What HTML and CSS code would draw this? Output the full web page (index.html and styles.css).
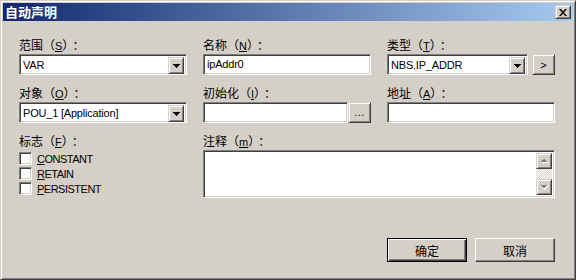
FILE: index.html
```html
<!DOCTYPE html>
<html lang="zh">
<head>
<meta charset="utf-8">
<title>自动声明</title>
<link rel="stylesheet" href="styles.css">
</head>
<body>
<div class="window">
  <div class="titlebar">
    <span class="title">自动声明</span>
    <span class="close raised">
      <svg width="8" height="7" viewBox="0 0 8 7"><path d="M0 0h2l2 2.4 2-2.4h2L5 3.5 8 7H6L4 4.6 2 7H0l3-3.5z" fill="#000"/></svg>
    </span>
  </div>
  <div class="content">
    <div class="grid">
      <div class="field">
        <div class="lbl">范围（<u>S</u>）<span class="colon">：</span></div>
        <div class="combo sunken"><span class="val">VAR</span><span class="drop raised"><svg width="7" height="4" viewBox="0 0 7 4"><path d="M0 0h7v1h-1v1h-1v1h-1v1h-1v-1h-1v-1h-1v-1h-1z" fill="#000"/></svg></span></div>
      </div>
      <div class="field">
        <div class="lbl">名称（<u>N</u>）<span class="colon">：</span></div>
        <div class="text sunken">ipAddr0</div>
      </div>
      <div class="field">
        <div class="lbl">类型（<u>T</u>）<span class="colon">：</span></div>
        <div class="inline gap4">
          <div class="combo sunken grow"><span class="val">NBS.IP_ADDR</span><span class="drop raised"><svg width="7" height="4" viewBox="0 0 7 4"><path d="M0 0h7v1h-1v1h-1v1h-1v1h-1v-1h-1v-1h-1v-1h-1z" fill="#000"/></svg></span></div>
          <span class="sbtn raised">&gt;</span>
        </div>
      </div>

      <div class="field">
        <div class="lbl">对象（<u>O</u>）<span class="colon">：</span></div>
        <div class="combo sunken"><span class="val">POU_1 [Application]</span><span class="drop raised"><svg width="7" height="4" viewBox="0 0 7 4"><path d="M0 0h7v1h-1v1h-1v1h-1v1h-1v-1h-1v-1h-1v-1h-1z" fill="#000"/></svg></span></div>
      </div>
      <div class="field">
        <div class="lbl">初始化（<u>I</u>）<span class="colon">：</span></div>
        <div class="inline">
          <div class="text sunken grow"></div>
          <span class="sbtn raised dots">...</span>
        </div>
      </div>
      <div class="field">
        <div class="lbl">地址（<u>A</u>）<span class="colon">：</span></div>
        <div class="text sunken"></div>
      </div>

      <div class="field">
        <div class="lbl">标志（<u>F</u>）<span class="colon">：</span></div>
        <div class="checks">
          <div class="check"><span class="box sunken"></span><span><u>C</u>ONSTANT</span></div>
          <div class="check"><span class="box sunken"></span><span><u>R</u>ETAIN</span></div>
          <div class="check"><span class="box sunken"></span><span><u>P</u>ERSISTENT</span></div>
        </div>
      </div>
      <div class="field span2">
        <div class="lbl">注释（<u>m</u>）<span class="colon">：</span></div>
        <div class="memo sunken">
          <div class="scroll">
            <span class="sb raised"><svg width="7" height="5" viewBox="0 0 7 5"><path d="M4 1h1v1h1v1h1v1h-6v-1h1v-1h1v-1h1z" fill="#fff"/><path d="M3 0h1v1h1v1h1v1h-6v-1h1v-1h1z" fill="#808080"/></svg></span>
            <span class="track"></span>
            <span class="sb raised"><svg width="7" height="5" viewBox="0 0 7 5"><path d="M1 1h6v1h-1v1h-1v1h-1v1h-1v-1h-1v-1h-1z" fill="#fff"/><path d="M0 0h6v1h-1v1h-1v1h-2v-1h-1v-1h-1z" fill="#808080"/></svg></span>
          </div>
        </div>
      </div>
    </div>
    <div class="footer">
      <span class="btn default">确定</span>
      <span class="btn raised">取消</span>
    </div>
  </div>
</div>
</body>
</html>
```

FILE: styles.css
```css
* { box-sizing: border-box; margin: 0; padding: 0; }
html, body { width: 576px; height: 280px; overflow: hidden; background: #d4d0c8; }
body {
  font-family: "Liberation Sans", "Noto Sans CJK SC", sans-serif;
  font-size: 11px;
  color: #000;
}
.window {
  width: 576px;
  height: 280px;
  border: 1px solid;
  border-color: #d4d0c8 #404040 #404040 #d4d0c8;
  box-shadow: inset 1px 1px #fff, inset -1px -1px #808080;
  padding: 2px;
  background: #d4d0c8;
  display: flex;
  flex-direction: column;
}
.titlebar {
  height: 18px;
  background: linear-gradient(to right, #12296d, #a6caf0);
  display: flex;
  align-items: center;
  justify-content: space-between;
  padding: 0 2px;
}
.title {
  color: #fff;
  font: bold 13px/18px "Noto Sans CJK SC", sans-serif;
  letter-spacing: 0;
}
.raised {
  background: #d4d0c8;
  border: 1px solid;
  border-color: #d4d0c8 #404040 #404040 #d4d0c8;
  box-shadow: inset 1px 1px #fff, inset -1px -1px #808080;
}
.sunken {
  border: 1px solid;
  border-color: #808080 #fff #fff #808080;
  box-shadow: inset 1px 1px #404040, inset -1px -1px #d4d0c8;
}
.close {
  width: 16px;
  height: 14px;
  display: flex;
  align-items: center;
  justify-content: center;
}
.content {
  padding: 18px 18px 0 16px;
}
.grid {
  display: grid;
  grid-template-columns: 168px 168px 168px;
  grid-template-rows: 36px 36px 63px;
  column-gap: 16px;
  row-gap: 12px;
}
.span2 { grid-column: 2 / 4; }
.lbl {
  height: 14px;
  line-height: 14px;
  margin-bottom: 1px;
  font-size: 12px;
  white-space: nowrap;
}
.lbl u { font-size: 11px; }
.colon { margin-left: 4px; }
.combo {
  height: 21px;
  display: flex;
  background: #fff;
  padding: 2px;
}
.val {
  flex: 1;
  line-height: 17px;
  padding-left: 1px;
  white-space: nowrap;
  overflow: hidden;
  letter-spacing: -0.2px;
}
.drop {
  width: 16px;
  height: 17px;
  display: flex;
  align-items: center;
  justify-content: center;
}
.text {
  height: 21px;
  background: #fff;
  padding: 0 3px;
  line-height: 19px;
  letter-spacing: -0.2px;
}
.inline { display: flex; }
.gap4 { gap: 4px; }
.grow { flex: 1; }
.sbtn {
  width: 23px;
  height: 21px;
  display: flex;
  align-items: center;
  justify-content: center;
  font-size: 11px;
  flex: none;
}
.dots { align-items: flex-end; padding-bottom: 4px; letter-spacing: 0.5px; }
.checks { padding-top: 1px; }
.check {
  display: flex;
  align-items: center;
  gap: 5px;
  height: 15px;
  letter-spacing: -0.5px;
}
.box {
  width: 13px;
  height: 13px;
  background: #fff;
  flex: none;
}
.memo {
  height: 48px;
  background: #fff;
  padding: 2px;
  display: flex;
  justify-content: flex-end;
}
.scroll {
  width: 16px;
  display: flex;
  flex-direction: column;
}
.sb {
  height: 16px;
  display: flex;
  align-items: center;
  justify-content: center;
}
.track {
  flex: 1;
  background: repeating-conic-gradient(#fff 0 25%, #d4d0c8 0 50%) 0 0 / 2px 2px;
}
.footer {
  display: flex;
  justify-content: flex-end;
  gap: 8px;
  margin-top: 40px;
}
.btn {
  width: 80px;
  height: 24px;
  display: flex;
  align-items: center;
  justify-content: center;
  font-family: "Noto Sans CJK SC", sans-serif;
  font-size: 12px;
}
.btn.raised {
  border-color: #fff #404040 #404040 #fff;
  box-shadow: inset -1px -1px #808080;
}
.btn.default {
  background: #d4d0c8;
  border: 1px solid #000;
  box-shadow: inset 1px 1px #fff, inset -1px -1px #404040, inset -2px -2px #808080;
}
```
